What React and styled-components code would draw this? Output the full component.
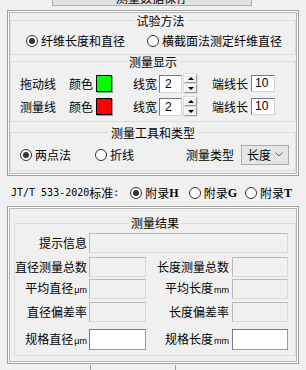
import React from 'react';
import styled, { createGlobalStyle } from 'styled-components';

const GlobalStyle = createGlobalStyle`
  html, body {
    margin: 0;
    padding: 0;
    background: #f0f0f0;
  }
  body {
    font-family: "Noto Sans CJK SC", "Microsoft YaHei", sans-serif;
    font-size: 12px;
    color: #000;
  }
`;

const Window = styled.div`
  width: 306px;
  height: 370px;
  overflow: hidden;
  background: #f0f0f0;
  display: flex;
  flex-direction: column;
`;

// the bottom edge of a button cut off by the top of the window
const TopTab = styled.div`
  margin-left: 52px;
  width: 198px;
  height: 5px;
  border: 1px solid #adadad;
  border-top: none;
  background: #e1e1e1;
  overflow: hidden;
  display: flex;
  align-items: flex-end;
  justify-content: center;
  line-height: 14px;
`;

const Panel = styled.div`
  box-sizing: border-box;
  margin: ${p => p.$top}px 7px 0;
  height: ${p => p.$height}px;
  border: 1px solid #a0a0a0;
  box-shadow: inset 0 0 0 1px #fff, inset 0 0 0 2px #b4b4b4;
  padding: 0 2px;
`;

const Group = styled.fieldset`
  margin: ${p => p.$mt || 0}px 0 0 ${p => p.$ml || 0}px;
  padding: ${p => p.$pad};
  border: 1px solid #dcdcdc;
  min-width: 0;
`;

const Caption = styled.legend`
  margin: 0 auto;
  padding: 0 2px;
  line-height: 14px;
  font-size: 12px;
`;

const Row = styled.div`
  display: flex;
  align-items: center;
  height: ${p => p.$h || 20}px;
  margin-top: ${p => p.$mt || 0}px;
  padding-left: ${p => p.$pl || 0}px;
  padding-right: ${p => p.$pr || 0}px;
`;

const Text = styled.span`
  line-height: 14px;
  white-space: nowrap;
  margin-left: ${p => p.$ml || 0}px;
`;

const RadioWrap = styled.label`
  display: flex;
  align-items: center;
  margin-left: ${p => p.$ml || 0}px;
  line-height: 14px;
  white-space: nowrap;
`;

const Circle = styled.span`
  box-sizing: border-box;
  width: 12px;
  height: 12px;
  border-radius: 50%;
  border: 1px solid #333;
  background: #fff;
  margin-right: 3px;
  display: flex;
  align-items: center;
  justify-content: center;
  &::after {
    content: '';
    width: 6px;
    height: 6px;
    border-radius: 50%;
    background: ${p => (p.$checked ? '#333' : 'transparent')};
  }
`;

const Swatch = styled.span`
  box-sizing: border-box;
  width: 16px;
  height: 17px;
  margin-left: 3px;
  border: 1px solid #000;
  box-shadow: 1px 1px 0 #9a9a9a;
  background: ${p => p.$color};
`;

const NumBox = styled.span`
  box-sizing: border-box;
  width: ${p => p.$w}px;
  height: ${p => p.$h}px;
  margin-left: ${p => p.$ml || 0}px;
  background: #fff;
  border: 1px solid;
  border-color: #7a7a7a #d4d4d4 #d4d4d4 #7a7a7a;
  padding-left: ${p => p.$pl}px;
  line-height: ${p => p.$h - 2}px;
  font-family: "Liberation Sans", Arial, sans-serif;
  font-size: 12px;
`;

const Spin = styled.span`
  display: flex;
  flex-direction: column;
  margin-left: 2px;
  gap: 1px;
`;

const SpinButton = styled.span`
  box-sizing: border-box;
  width: 13px;
  height: 9px;
  background: #f0f0f0;
  border: 1px solid;
  border-color: #fff #a0a0a0 #a0a0a0 #fff;
  box-shadow: 0 0 0 0.5px #c8c8c8;
  display: flex;
  align-items: center;
  justify-content: center;
  &::after {
    content: '';
    width: 0;
    height: 0;
    border-left: 3px solid transparent;
    border-right: 3px solid transparent;
    ${p => (p.$down ? 'border-top: 3px solid #000;' : 'border-bottom: 3px solid #000;')}
  }
`;

const Select = styled.div`
  box-sizing: border-box;
  width: 48px;
  height: 20px;
  margin-left: 7px;
  background: #e5e5e5;
  border: 1px solid #acacac;
  display: flex;
  align-items: center;
  justify-content: space-between;
  padding: 0 5px 0 5px;
  line-height: 14px;
`;

const Mono = styled.span`
  font-family: "DejaVu Sans Mono", "Liberation Mono", monospace;
  font-size: 10px;
  letter-spacing: 0;
`;

const Letter = styled.span`
  font-family: "Liberation Serif", "Times New Roman", serif;
  font-weight: bold;
  font-size: 12px;
`;

const StandardRow = styled.div`
  display: flex;
  align-items: center;
  height: 20px;
  margin-top: 8px;
  padding-left: 11px;
  white-space: nowrap;
  line-height: 14px;
`;

const ResultRow = styled.div`
  display: grid;
  grid-template-columns: 72px 57px 82px 56px;
  column-gap: 2px;
  height: ${p => p.$h || 20}px;
  margin-top: ${p => p.$mt || 0}px;
  align-items: center;
`;

const Label = styled.span`
  text-align: right;
  line-height: 14px;
  white-space: nowrap;
  padding-right: ${p => p.$pr || 0}px;
`;

const Unit = styled.span`
  font-family: "Liberation Sans", Arial, sans-serif;
  font-size: 9px;
  margin-left: 1px;
`;

const Field = styled.span`
  box-sizing: border-box;
  height: 100%;
  grid-column: ${p => p.$span || 'auto'};
  background: ${p => (p.$white ? '#fff' : '#f0f0f0')};
  border: 1px solid;
  border-color: ${p => (p.$white ? '#7a7a7a #9a9a9a #9a9a9a #7a7a7a' : '#b9b9b9 #d9d9d9 #d9d9d9 #b9b9b9')};
`;

const BottomStub = styled.div`
  margin: 1px 0 0 90px;
  width: 84px;
  height: 5px;
  border-left: 1px solid #a0a0a0;
  border-right: 1px solid #a0a0a0;
`;

function Radio({ checked, ml, children }) {
  return (
    <RadioWrap $ml={ml}>
      <Circle $checked={checked} />
      {children}
    </RadioWrap>
  );
}

function LineRow({ name, color, mt }) {
  return (
    <Row $mt={mt} $pl={9}>
      <Text>{name}</Text>
      <Text $ml={13}>颜色</Text>
      <Swatch $color={color} />
      <Text $ml={21}>线宽</Text>
      <NumBox $w={23} $h={18} $ml={2} $pl={5}>2</NumBox>
      <Spin>
        <SpinButton />
        <SpinButton $down />
      </Spin>
      <Text $ml={15}>端线长</Text>
      <NumBox $w={24} $h={17} $ml={3} $pl={3}>10</NumBox>
    </Row>
  );
}

export default function App() {
  return (
    <>
      <GlobalStyle />
      <Window>
        <TopTab>测量数据保存</TopTab>

        <Panel $top={4} $height={166}>
          <Group $mt={3} $pad="4px 0 4px 15px">
            <Caption>试验方法</Caption>
            <Row $h={18}>
              <Radio checked>纤维长度和直径</Radio>
              <Radio ml={22}>横截面法测定纤维直径</Radio>
            </Row>
          </Group>

          <Group $pad="5px 0 4px 0">
            <Caption>测量显示</Caption>
            <LineRow name="拖动线" color="#00ff00" />
            <LineRow name="测量线" color="#ff0000" mt={3} />
          </Group>

          <Group $mt={4} $pad="5px 0 5px 0">
            <Caption>测量工具和类型</Caption>
            <Row $pl={9} $pr={6}>
              <Radio checked>两点法</Radio>
              <Radio ml={24}>折线</Radio>
              <Text style={{ marginLeft: 'auto' }}>测量类型</Text>
              <Select>
                <span>长度</span>
                <svg width="8" height="5" viewBox="0 0 8 5">
                  <path d="M0.5 0.5 L4 4 L7.5 0.5" fill="none" stroke="#606060" strokeWidth="1" />
                </svg>
              </Select>
            </Row>
          </Group>
        </Panel>

        <StandardRow>
          <Mono>JT/T 533-2020</Mono>
          <span>标准</span>
          <Mono>:</Mono>
          <Radio checked ml={11}>附录<Letter>H</Letter></Radio>
          <Radio ml={10}>附录<Letter>G</Letter></Radio>
          <Radio ml={8}>附录<Letter>T</Letter></Radio>
        </StandardRow>

        <Panel $top={3} $height={158}>
          <Group $mt={9} $ml={4} $pad="3px 0 5px 0">
            <Caption>测量结果</Caption>
            <ResultRow>
              <Label>提示信息</Label>
              <Field $span="2 / 5" />
            </ResultRow>
            <ResultRow $mt={4}>
              <Label>直径测量总数</Label>
              <Field />
              <Label $pr={1}>长度测量总数</Label>
              <Field />
            </ResultRow>
            <ResultRow $mt={2}>
              <Label>平均直径<Unit>μm</Unit></Label>
              <Field />
              <Label $pr={1}>平均长度<Unit>mm</Unit></Label>
              <Field />
            </ResultRow>
            <ResultRow $mt={3}>
              <Label>直径偏差率</Label>
              <Field />
              <Label $pr={1}>长度偏差率</Label>
              <Field />
            </ResultRow>
            <ResultRow $mt={7} $h={21}>
              <Label>规格直径<Unit>μm</Unit></Label>
              <Field $white />
              <Label $pr={1}>规格长度<Unit>mm</Unit></Label>
              <Field $white />
            </ResultRow>
          </Group>
        </Panel>

        <BottomStub />
      </Window>
    </>
  );
}
